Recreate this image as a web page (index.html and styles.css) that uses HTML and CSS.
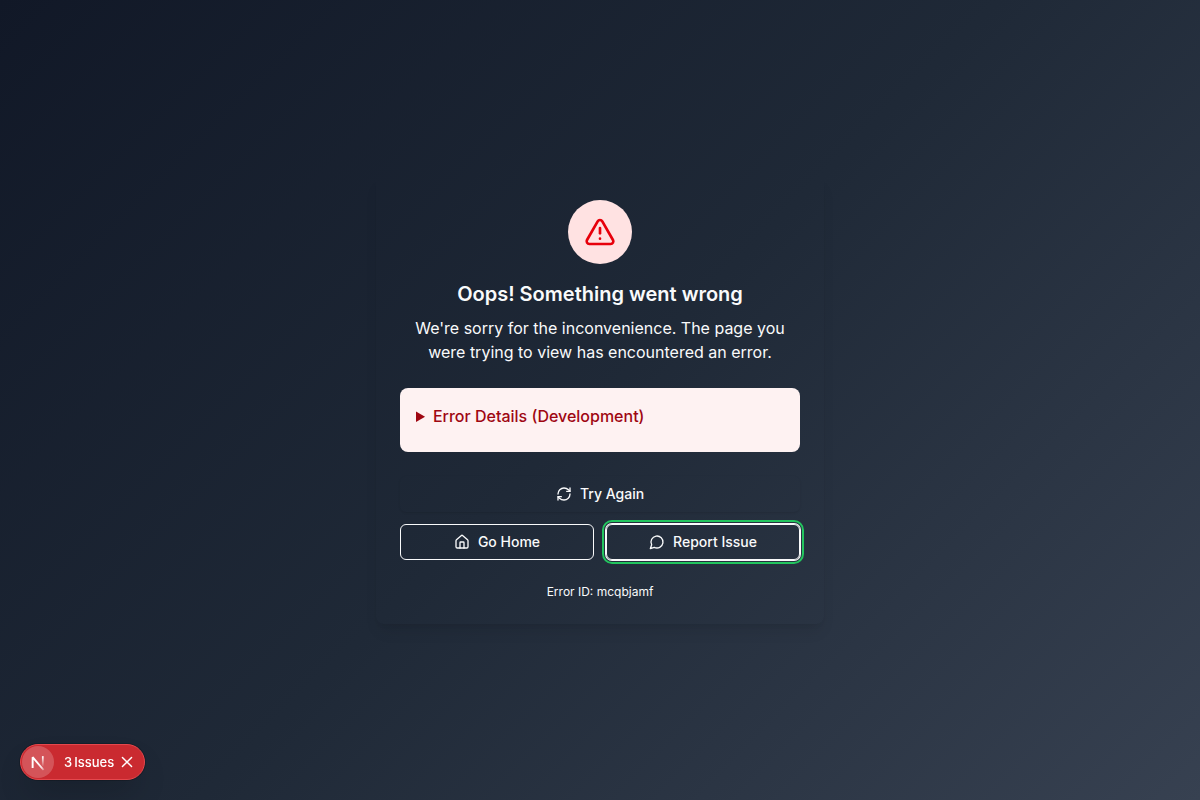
FILE: index.html
```html
<!DOCTYPE html>
<html lang="en">
<head>
<meta charset="utf-8">
<meta name="viewport" content="width=device-width, initial-scale=1">
<title>Something went wrong</title>
<link rel="stylesheet" href="styles.css">
</head>
<body>
<main class="page">
  <section class="card">
    <header class="card-header">
      <div class="alert-badge">
        <svg class="alert-icon" viewBox="0 0 24 24" aria-hidden="true"><path d="m21.73 18-8-14a2 2 0 0 0-3.48 0l-8 14A2 2 0 0 0 4 21h16a2 2 0 0 0 1.73-3"/><path d="M12 9v4"/><path d="M12 17h.01"/></svg>
      </div>
      <h1 class="title">Oops! Something went wrong</h1>
      <p class="message">We're sorry for the inconvenience. The page you were trying to view has encountered an error.</p>
    </header>
    <details class="error-details">
      <summary class="error-summary">Error Details (Development)</summary>
    </details>
    <div class="actions">
      <button class="button button-primary" type="button">
        <svg class="icon" viewBox="0 0 24 24" aria-hidden="true"><path d="M3 12a9 9 0 0 1 9-9 9.75 9.75 0 0 1 6.74 2.74L21 8"/><path d="M21 3v5h-5"/><path d="M21 12a9 9 0 0 1-9 9 9.75 9.75 0 0 1-6.74-2.74L3 16"/><path d="M8 16H3v5"/></svg>
        Try Again
      </button>
      <div class="action-row">
        <button class="button button-outline" type="button">
          <svg class="icon" viewBox="0 0 24 24" aria-hidden="true"><path d="M15 21v-8a1 1 0 0 0-1-1h-4a1 1 0 0 0-1 1v8"/><path d="M3 10a2 2 0 0 1 .709-1.528l7-5.999a2 2 0 0 1 2.582 0l7 5.999A2 2 0 0 1 21 10v9a2 2 0 0 1-2 2H5a2 2 0 0 1-2-2z"/></svg>
          Go Home
        </button>
        <button class="button button-outline is-focused" type="button">
          <svg class="icon" viewBox="0 0 24 24" aria-hidden="true"><path d="M7.9 20A9 9 0 1 0 4 16.1L2 22Z"/></svg>
          Report Issue
        </button>
      </div>
    </div>
    <p class="error-id">Error ID: mcqbjamf</p>
  </section>
</main>
<aside class="issues">
  <button class="issues-logo" type="button" aria-label="Open developer tools">
    <svg class="next-logo" viewBox="0 0 40 40" fill="none" aria-hidden="true">
      <defs>
        <linearGradient id="diagonal" x1="20" y1="21" x2="28" y2="31" gradientUnits="userSpaceOnUse"><stop stop-color="#fff"/><stop offset="0.6" stop-color="#fff" stop-opacity="0.8"/><stop offset="1" stop-color="#fff" stop-opacity="0.1"/></linearGradient>
        <linearGradient id="stem" x1="26" y1="13" x2="26" y2="26" gradientUnits="userSpaceOnUse"><stop stop-color="#fff"/><stop offset="1" stop-color="#fff" stop-opacity="0"/></linearGradient>
      </defs>
      <path d="M13.3 27.4V14L27 30" stroke="url(#diagonal)" stroke-width="2.4" stroke-linejoin="bevel"/>
      <path d="M26 12.7v13" stroke="url(#stem)" stroke-width="2.2"/>
    </svg>
  </button>
  <button class="issues-open" type="button"><span>3</span><span>Issues</span></button>
  <button class="issues-close" type="button" aria-label="Dismiss">
    <svg class="close-icon" viewBox="0 0 14 14" aria-hidden="true"><path d="m3 3 8 8M11 3l-8 8"/></svg>
  </button>
</aside>
</body>
</html>
```
FILE: styles.css
```css
*, *::before, *::after { box-sizing: border-box; }

body {
  margin: 0;
  font-family: Inter, "Liberation Sans", sans-serif;
  font-size: 16px;
  line-height: 24px;
  color: #f9fafb;
}

h1, p { margin: 0; }

button {
  font: inherit;
  color: inherit;
  background: none;
  border: 0;
  padding: 0;
  cursor: pointer;
}

.page {
  min-height: 100vh;
  display: flex;
  align-items: center;
  justify-content: center;
  padding: 16px;
  background: linear-gradient(135deg, #111827, #1f2937, #374151);
}

.card {
  width: 100%;
  max-width: 448px;
  padding: 24px;
  display: flex;
  flex-direction: column;
  gap: 24px;
  border-radius: 8px;
  box-shadow: 0 10px 15px -3px rgb(0 0 0 / 0.08), 0 4px 6px -4px rgb(0 0 0 / 0.08);
}

.card-header { text-align: center; }

.alert-badge {
  width: 64px;
  height: 64px;
  margin: 0 auto 16px;
  display: flex;
  align-items: center;
  justify-content: center;
  border-radius: 50%;
  background: #ffe2e2;
}

.icon, .alert-icon, .close-icon {
  fill: none;
  stroke: currentColor;
  stroke-width: 2;
  stroke-linecap: round;
  stroke-linejoin: round;
}

.alert-icon {
  width: 32px;
  height: 32px;
  color: #e7000b;
}

.title {
  margin-bottom: 8px;
  font-size: 20px;
  line-height: 28px;
  font-weight: 600;
}

.error-details {
  padding: 16px 16px 24px;
  border-radius: 8px;
  background: #fef2f2;
}

.error-summary {
  font-weight: 500;
  color: #9f0712;
  cursor: pointer;
}

.actions {
  display: flex;
  flex-direction: column;
  gap: 12px;
}

.action-row {
  display: grid;
  grid-template-columns: 1fr 1fr;
  gap: 12px;
}

.button {
  height: 36px;
  display: flex;
  align-items: center;
  justify-content: center;
  gap: 8px;
  border-radius: 6px;
  font-size: 14px;
  line-height: 20px;
  font-weight: 500;
}

.icon {
  width: 16px;
  height: 16px;
}

.button-primary { box-shadow: 0 1px 2px rgb(0 0 0 / 0.1); }

.button-outline { border: 1px solid #f9fafb; }

.is-focused {
  box-shadow: 0 0 0 1px #f9fafb;
  outline: 2px solid #22c55e;
  outline-offset: 2px;
}

.error-id {
  font-size: 12px;
  line-height: 16px;
  text-align: center;
}

.issues {
  position: fixed;
  left: 20px;
  bottom: 20px;
  height: 36px;
  padding: 0 9px 0 1px;
  display: flex;
  align-items: center;
  border: 1px solid #e5484d;
  border-radius: 18px;
  background: #ca2a30;
  color: #fff;
  box-shadow: 0 0 0 1px rgb(0 0 0 / 0.2), 0 16px 32px -8px rgb(0 0 0 / 0.24);
}

.issues-logo {
  width: 32px;
  height: 32px;
  border-radius: 50%;
  background: rgb(255 255 255 / 0.2);
}

.next-logo {
  display: block;
  width: 32px;
  height: 32px;
}

.issues-open {
  display: flex;
  gap: 2px;
  margin-left: 10px;
  font-size: 13px;
  line-height: 16px;
  font-weight: 500;
}

.issues-close { margin-left: 5px; }

.close-icon {
  display: block;
  width: 16px;
  height: 16px;
  stroke-width: 1.3;
}
```
